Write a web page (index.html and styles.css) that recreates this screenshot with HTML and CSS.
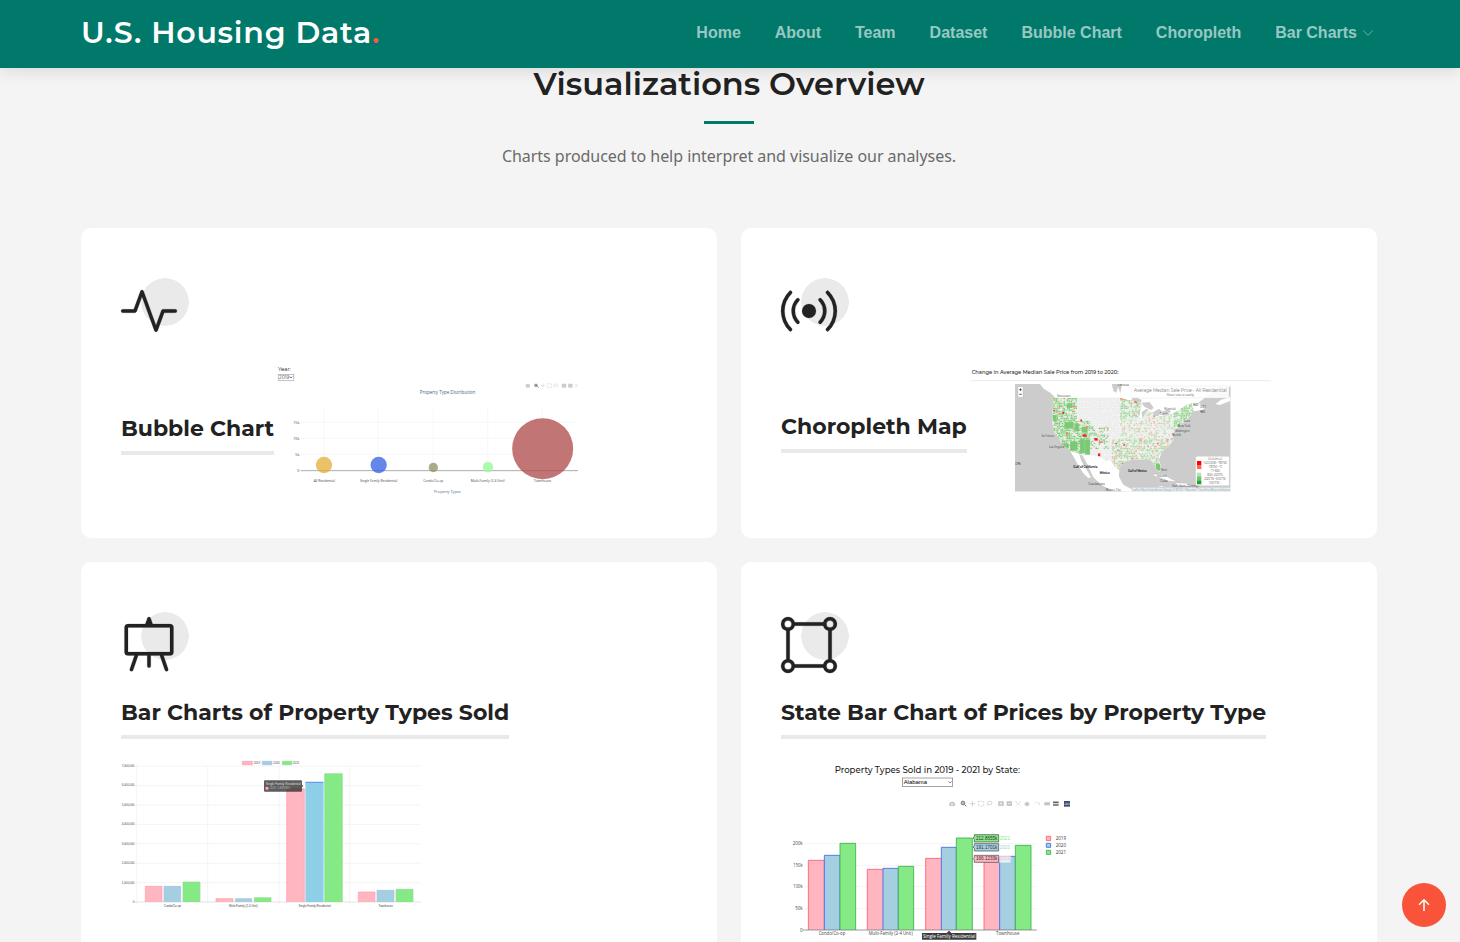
FILE: index.html
```html
<!DOCTYPE html>
<html lang="en">
<head>
<meta charset="utf-8">
<title>U.S. Housing Data</title>
<link rel="stylesheet" href="styles.css">
</head>
<body>
<header class="header">
  <div class="container header-inner">
    <h1 class="logo">U.S. Housing Data<span class="dot">.</span></h1>
    <nav class="nav">
      <a>Home</a><a>About</a><a>Team</a><a>Dataset</a><a>Bubble Chart</a><a>Choropleth</a>
      <a class="drop">Bar Charts <svg width="12" height="12" viewBox="0 0 16 16"><path d="M2 5l6 6 6-6" fill="none" stroke="currentColor" stroke-linecap="round" stroke-linejoin="round"/></svg></a>
    </nav>
  </div>
</header>
<main class="container">
  <div class="section-head">
    <h2>Visualizations Overview</h2>
    <div class="rule"></div>
    <p>Charts produced to help interpret and visualize our analyses.</p>
  </div>
  <div class="grid">
    <article class="card">
      <div class="icon"><svg width="56" height="56" viewBox="0 0 16 16"><path fill-rule="evenodd" d="M6 2a.5.5 0 0 1 .47.33L10 12.036l1.53-4.208A.5.5 0 0 1 12 7.5h3.5a.5.5 0 0 1 0 1h-3.15l-1.88 5.17a.5.5 0 0 1-.94 0L6 3.964 4.47 8.171A.5.5 0 0 1 4 8.5H.5a.5.5 0 0 1 0-1h3.15l1.88-5.17A.5.5 0 0 1 6 2"/></svg></div>
      <div class="row">
        <h4 class="title title-bubble">Bubble Chart</h4>
        <svg class="chart" width="316" height="150" viewBox="12 0 948 450">
          <text x="24" y="47" font-size="16" textLength="38" fill="#111">Year:</text>
          <rect x="24.500" y="58.500" width="47" height="18" fill="#fff" stroke="#888" stroke-width="1.500"/>
          <text x="27" y="73" font-size="14" textLength="31">2019</text><path d="M60 65l3 4 4-4" fill="none" stroke="#333" stroke-width="2"/>
          <g fill="#ccc" stroke="#ccc" stroke-width="1.500"><rect x="768" y="88" width="11" height="9"/><circle cx="798" cy="91" r="5" fill="#888"/><path d="M802 94l4 4" stroke="#888" stroke-width="3"/><path d="M812 92h13M818.500 86v12"/><rect x="832" y="86" width="12" height="12" fill="none" stroke-dasharray="4 2"/><ellipse cx="857" cy="91" rx="6" ry="4" fill="none"/><path d="M853 94l-2 4"/><rect x="876" y="87" width="12" height="10"/><rect x="895" y="87" width="12" height="10"/><path d="M915 87l8 10M923 87l-8 10"/></g>
          <text class="plot blue" x="449" y="117" font-size="15" textLength="167">Property Type Distribution</text>
          <path d="M92 202h832M92 250h832M92 298h832M162 155v192M325 155v192M489 155v192M653 155v192M817 155v192" stroke="#f4f4f4" stroke-width="2"/>
          <path d="M92 347h832" stroke="#999" stroke-width="2.500"/>
          <g class="plot tick" font-size="11" text-anchor="end"><text x="88" y="206">15k</text><text x="88" y="254">10k</text><text x="88" y="303">5k</text><text x="88" y="351">0</text></g>
          <circle cx="162" cy="330" r="24.500" fill="#e3aa2f" opacity=".72"/><circle cx="326" cy="330" r="24.500" fill="#315fe5" opacity=".75"/><circle cx="490" cy="337.500" r="14" fill="#909060" opacity=".75"/><circle cx="654" cy="336" r="15.500" fill="#98fb98" opacity=".8"/><circle cx="818" cy="281" r="91.500" fill="#b04c4c" opacity=".77"/>
          <g class="plot tick" font-size="10.500" text-anchor="middle"><text x="163" y="381" textLength="64">All Residential</text><text x="326" y="381" textLength="112">Single Family Residential</text><text x="490" y="381" textLength="60">Condo/Co-op</text><text x="653" y="381" textLength="102">Multi-Family (2-4 Unit)</text><text x="817" y="381" textLength="52">Townhouse</text></g>
          <text class="plot blue" x="492" y="413" font-size="13" textLength="80">Property Types</text>
        </svg>
      </div>
    </article>
    <article class="card">
      <div class="icon"><svg width="56" height="56" viewBox="0 0 16 16"><path d="M3.050 3.050a7 7 0 0 0 0 9.900.5.5 0 0 1-.707.707 8 8 0 0 1 0-11.314.5.5 0 0 1 .707.707m2.122 2.122a4 4 0 0 0 0 5.656.5.5 0 1 1-.708.708 5 5 0 0 1 0-7.072.5.5 0 0 1 .708.708m5.656-.708a.5.5 0 0 1 .708 0 5 5 0 0 1 0 7.072.5.5 0 1 1-.708-.708 4 4 0 0 0 0-5.656.5.5 0 0 1 0-.708m2.122-2.120a.5.5 0 0 1 .707 0 8 8 0 0 1 0 11.313.5.5 0 0 1-.707-.707 7 7 0 0 0 0-9.900.5.5 0 0 1 0-.707zM10 8a2 2 0 1 1-4 0 2 2 0 0 1 4 0"/></svg></div>
      <div class="row">
        <h4 class="title title-map">Choropleth Map</h4>
        <svg class="chart map" width="308" height="140" viewBox="6 0 924 420">
          <defs>
            <clipPath id="frame"><rect x="150" y="72" width="647" height="323"/></clipPath>
            <clipPath id="us"><path id="usShape" d="M262 113H462L485 119 510 124 530 130 526 150 522 172 532 178 540 162 548 150 562 158 572 172 590 168 610 165 632 156 660 137 680 130 686 154 668 176 650 190 634 208 622 222 625 240 608 262 590 275 580 290 582 308 590 328 582 335 570 322 562 304 546 297 528 299 505 298 485 303 465 318 463 330 448 318 435 300 422 303 408 290 375 285 345 282 315 272 294 255 280 235 266 212 262 186Z"/></clipPath>
          </defs>
          <text class="strongtext" x="20" y="41" font-size="16" textLength="440">Change in Average Median Sale Price from 2019 to 2020:</text>
          <path d="M18 62h900" stroke="#e6e6e6" stroke-width="2.500"/>
          <g clip-path="url(#frame)">
            <rect x="150" y="72" width="647" height="323" fill="#ccc"/>
            <path d="M225 72L236 86 256 98 270 112 262 125 262 186 266 212 280 235 298 258 316 274 328 294 342 320 355 340 370 354 378 352 364 328 350 305 343 284 352 286 370 318 384 350 408 374 445 393 500 396 500 388 475 374 462 350 463 322 480 305 505 298 546 297 562 304 570 322 582 335 590 328 582 300 590 275 610 258 625 240 622 218 640 200 668 176 686 154 712 150 735 130 765 135 797 122V72Z" fill="#fff"/>
            <path d="M228 84l42 32-18-2-25-20ZM440 72l6 22 8 4 5-18 7 20 5-28ZM506 108l24 12-2 8-30-6ZM533 178l-3-22 16-10 5 5-9 29ZM530 128l24-2 12 18-8 6-20-10ZM562 158l20-12 9 8-10 13-16 3ZM588 156l24-8 6 8-22 8ZM700 128l24-18 36-30h37v30l-30 10-25 20-25 2Z" fill="#ccc"/>
            <path d="M560 345q30-9 55 10l23 10-30-2-22-9ZM630 368l35 2 20 10-45-2ZM580 378l14-1 2 4-14 1Z" fill="#fff" stroke="#aaa"/>
            <use href="#usShape" fill="#ebebeb"/>
            <g id="counties" clip-path="url(#us)"></g>
            <g class="label" font-size="10"><text x="276" y="112" textLength="41">Vancouver</text><text x="598" y="149" textLength="34">Montréal</text><text x="584" y="166" textLength="28">Toronto</text><text x="458" y="77" textLength="34">Canada</text><text x="230" y="230" textLength="38">San Francisco</text><text x="252" y="265" textLength="46">Los Angeles</text><text class="bold" x="325" y="323" textLength="72">Gulf of California</text><text class="bold" x="404" y="341" textLength="30">México</text><text x="370" y="374" textLength="50">Guadalajara</text><text x="422" y="394" textLength="45">Mexico City</text><text class="bold" x="489" y="335" textLength="56">Gulf of Mexico</text><text x="576" y="352" textLength="28">Habana</text><text x="588" y="333" textLength="18">Miami</text><text x="630" y="217" textLength="44">Washington</text><text x="638" y="202" textLength="38">New York</text><text x="656" y="185" textLength="20">Boston</text><text x="622" y="229" textLength="26">Norfolk</text><text x="586" y="367" textLength="22">Cuba</text><text x="622" y="380" textLength="80">Haiti, Santo Domingo</text><text x="706" y="145">PEI</text><text x="706" y="160">NS</text><text x="684" y="138">NB</text><text x="151" y="314">PN</text></g>
            <g fill="#fff" stroke="#aaa"><rect x="159" y="80" width="15" height="32" rx="2"/><rect x="499" y="78" width="293" height="36" rx="4" fill-opacity=".88" stroke="#ddd"/><rect x="692" y="289" width="101" height="88" rx="4" stroke="#bbb"/></g>
            <path d="M163 89h7M166.500 85.500v7M163 103h7" stroke="#000" stroke-width="2"/>
            <text x="507" y="95" font-size="14" fill="#777" textLength="278">Average Median Sale Price - All Residential</text><text x="605" y="109" font-size="10" textLength="82">Hover over a county</text>
            <rect x="696" y="303" width="13" height="12" fill="red"/><rect x="696" y="315" width="13" height="12" fill="#ff6a4d"/><rect x="696" y="338" width="13" height="11" fill="#b5e2ad"/><rect x="696" y="349" width="13" height="12" fill="#71c56e"/><rect x="696" y="361" width="13" height="12" fill="#21a52d"/>
            <g font-size="10" fill="#555" text-anchor="middle"><text x="750" y="301" textLength="42">Undefined</text><text x="750" y="313" textLength="72">-1461008–-78750</text><text x="750" y="324" textLength="42">-78750–-71</text><text x="750" y="335" textLength="30">-71–826</text><text x="750" y="347" textLength="46">826–22075</text><text x="750" y="359" textLength="64">22075–106715</text><text x="750" y="371" textLength="36">106715+</text></g>
            <rect x="500" y="383" width="297" height="12" fill="#fff" opacity=".6"/><text x="502" y="392" font-size="8" fill="#4c9cc0" textLength="292">Leaflet | Map tiles by Stamen Design, CC BY 3.0 — Map data © OpenStreetMap contributors</text>
          </g>
        </svg>
      </div>
    </article>
    <article class="card tall">
      <div class="icon"><svg width="56" height="56" viewBox="0 0 16 16"><path d="M8 0a.5.5 0 0 1 .473.337L9.046 2H14a1 1 0 0 1 1 1v7a1 1 0 0 1-1 1h-1.850l1.323 3.837a.5.5 0 1 1-.946.326L11.092 11H8.500v3a.5.5 0 0 1-1 0v-3H4.908l-1.435 4.163a.5.5 0 1 1-.946-.326L3.850 11H2a1 1 0 0 1-1-1V3a1 1 0 0 1 1-1h4.954L7.527.337A.5.5 0 0 1 8 0M2 3v7h12V3z"/></svg></div>
      <h4 class="title title-sold">Bar Charts of Property Types Sold</h4>
      <svg class="chart" width="309" height="192" viewBox="33 0 927 576">
        <path d="M73 48h860M73 107h860M73 165h860M73 223h860M73 281h860M73 340h860M73 398h860M80 48v412M293 48v412M507 48v412M719 48v412" stroke="#efefef" stroke-width="2"/><path d="M73 456h860" stroke="#d5d5d5" stroke-width="2"/>
        <g class="arial tick" font-size="9" text-anchor="end"><text x="73" y="51" textLength="38">7,000,000</text><text x="73" y="109" textLength="38">6,000,000</text><text x="73" y="168" textLength="38">5,000,000</text><text x="73" y="226" textLength="38">4,000,000</text><text x="73" y="284" textLength="38">3,000,000</text><text x="73" y="342" textLength="38">2,000,000</text><text x="73" y="401" textLength="38">1,000,000</text><text x="73" y="459">0</text></g>
        <g class="pink bar"><path d="M106 456v-47h50v47M318 456v-10h51v10M530 456V116h53v340M745 456v-30h50v30M397 34h30v10h-30z"/></g>
        <g class="sky bar"><path d="M162 456v-47h50v47M376 456v-10h49v10M801 456v-35h51v35M457 34h29v10h-29z"/></g>
        <path d="M587 456V97h53v359" fill="#8ecfe8" stroke="#abcdf5" stroke-width="2"/><path d="M586 97h54" stroke="#5a8df0" stroke-width="3"/>
        <g class="green bar"><path d="M219 456v-60h51v60M433 456v-13h50v13M644 456V71h53v385M858 456v-38h51v38M517 34h29v10h-29z"/></g>
        <g class="arial tick" font-size="9"><text x="431" y="41" textLength="19">2019</text><text x="490" y="41" textLength="19">2020</text><text x="549" y="41" textLength="19">2021</text><g text-anchor="middle"><text x="187" y="471" textLength="51">Condo/Co-op</text><text x="400" y="471" textLength="86">Multi-Family (2-4 Unit)</text><text x="614" y="471" textLength="97">Single Family Residential</text><text x="827" y="471" textLength="43">Townhouse</text></g></g>
        <path d="M465 91h108q3 0 3 3v10l4 4-4 4v10q0 3-3 3H465q-3 0-3-3V94q0-3 3-3z" fill="#333" opacity=".8"/><g class="arial" font-size="10"><text x="467" y="104" fill="#ddd" textLength="105">Single Family Residential</text><text x="479" y="118" fill="#bbb" textLength="61">2019: 5,849,831</text></g><rect x="467" y="111" width="8" height="8" fill="#ffb6c1" stroke="#f66"/>
      </svg>
    </article>
    <article class="card tall">
      <div class="icon"><svg width="56" height="56" viewBox="0 0 16 16"><path d="M2 1a1 1 0 1 0 0 2 1 1 0 0 0 0-2M0 2a2 2 0 0 1 3.937-.5h8.126A2 2 0 1 1 14.500 3.937v8.126a2 2 0 1 1-2.437 2.437H3.937A2 2 0 1 1 1.500 12.063V3.937A2 2 0 0 1 0 2m2.500 1.937v8.126c.703.180 1.256.734 1.437 1.437h8.126a2 2 0 0 1 1.437-1.437V3.937A2 2 0 0 1 12.063 2.500H3.937A2 2 0 0 1 2.500 3.937M14 1a1 1 0 1 0 0 2 1 1 0 0 0 0-2M2 13a1 1 0 1 0 0 2 1 1 0 0 0 0-2m12 0a1 1 0 1 0 0 2 1 1 0 0 0 0-2"/></svg></div>
      <h4 class="title title-state">State Bar Chart of Prices by Property Type</h4>
      <svg class="chart state" width="309" height="187" viewBox="3 0 927 561">
        <text class="strongtext" x="164" y="53" font-size="25" textLength="556">Property Types Sold in 2019 - 2021 by State:</text>
        <rect x="367" y="69" width="151" height="25" fill="#fff" stroke="#777" stroke-width="2"/><text class="arial" x="371" y="88" font-size="18" textLength="70" fill="#000">Alabama</text><path d="M505 79l5 5 5-5" fill="none" stroke="#555" stroke-width="2"/>
        <g fill="#c4c4c4" stroke="#c4c4c4" stroke-width="2"><path d="M509 144h3l2-3h5l2 3h3v8h-15z"/><circle cx="516" cy="148" r="2" stroke="#fff"/><circle cx="549" cy="144" r="5.500" fill="none" stroke="#777" stroke-width="3"/><path d="M553 148l6 6M546 144h6" stroke="#777" stroke-width="3"/><path d="M569 146h17M577.500 138v17"/><rect x="595" y="139" width="16" height="14" fill="none" stroke-dasharray="5 3"/><ellipse cx="629" cy="144" rx="7" ry="5" fill="none"/><path d="M624 148l-1 5"/><rect x="656" y="140" width="14" height="12"/><rect x="681" y="140" width="14" height="12"/><path d="M659 146h8M663 142v8M684 146h8" stroke="#fff"/><path d="M706 139l16 14M722 139l-16 14" stroke-dasharray="7 3"/><path d="M733 147l8-7 8 7h-3v5h-10v-5z" stroke-width="1"/><path d="M766 143h12v10" fill="none" stroke-dasharray="4 3"/><rect x="794" y="143" width="15" height="7"/><path d="M819 142h17M819 150h17" stroke="#666" stroke-width="5"/><rect x="852" y="138" width="18" height="17" fill="#3d4b70" stroke="none"/><path d="M855 150v-4M859 150v-7M863 150v-4M867 150v-7" stroke="#dfe5f5"/></g>
        <path d="M72 266h698M72 331h698M72 395h698M72 461h698" stroke="#eee" stroke-width="2"/>
        <g class="plot tick" font-size="14" text-anchor="end"><text x="68" y="271" textLength="30">200k</text><text x="68" y="336" textLength="28">150k</text><text x="68" y="400" textLength="28">100k</text><text x="68" y="466" textLength="22">50k</text><text x="68" y="530">0</text></g>
        <path class="pink strong" d="M85 525V316h48v209M262 525V343h48v182M437 525V310h48v215M612 525V311h48v214"/>
        <path class="sky strong" d="M133 525V301h47v224M309 525V340h46v185M484 525V277h45v248M659 525V304h47v221"/>
        <path class="green strong" d="M180 525V265h47v260M355 525V334h46v191M529 525V249h48v276M706 525V271h47v254"/>
        <path d="M68 525h702" stroke="#666" stroke-width="2"/>
        <g class="plot tick" font-size="14" text-anchor="middle"><text x="156" y="540" textLength="80">Condo/Co-op</text><text x="332" y="540" textLength="132">Multi-Family (2-4 Unit)</text><text x="683" y="540" textLength="70">Townhouse</text></g>
        <path d="M500 534l7-7 7 7h75v20H426v-20z" fill="#3c3c3c"/><text class="plot" x="429" y="549" font-size="14" fill="#fff" textLength="157">Single Family Residential</text>
        <rect x="656" y="301" width="36" height="22" fill="#fff" opacity=".7"/>
        <g stroke="#444" stroke-width="2"><path d="M583 239h73v22h-73v-8l-4-4 4-4z" fill="#85ea85"/><path d="M583 266h73v22h-73v-8l-4-4 4-4z" fill="#a3cfe0"/><path d="M583 301h73v21h-73v-7l-4-4 4-4z" fill="#ffb6c1"/></g>
        <g class="arial" font-size="14"><text x="588" y="255" textLength="64">212.8655k</text><text x="588" y="282" textLength="64">191.1701k</text><text x="588" y="316" textLength="64">166.1233k</text><text x="659" y="255" fill="#85ea85" textLength="31">2021</text><text x="659" y="282" fill="#a3cfe0" textLength="31">2020</text><text x="659" y="316" fill="#ffb6c1" textLength="31">2019</text></g>
        <path class="pink strong" d="M799 244h13v13h-13z"/><path class="sky strong" d="M799 265h13v12h-13z"/><path class="green strong" d="M799 286h13v12h-13z"/>
        <g class="plot" font-size="14"><text x="827" y="256" textLength="31">2019</text><text x="827" y="276" textLength="31">2020</text><text x="827" y="297" textLength="31">2021</text></g>
      </svg>
    </article>
  </div>
</main>
<a class="to-top" aria-label="Back to top"><svg width="16" height="16" viewBox="0 0 16 16"><path d="M8 13.500V3M3.500 7.200L8 2.700l4.500 4.500" fill="none" stroke="#fff" stroke-width="1.500" stroke-linecap="round" stroke-linejoin="round"/></svg></a>
<script src="map.js"></script>
</body>
</html>
```
FILE: map.js
```js
// Scales chart labels to their slot, and fills the county grid of the choropleth.
(function () {
  document.querySelectorAll('.chart text[textLength]').forEach(function (t) {
    t.setAttribute('lengthAdjust', 'spacingAndGlyphs');
  });
  var seed = 7;
  function rnd() { seed = (seed * 16807) % 2147483647; return seed / 2147483647; }
  var out = '';
  function cell(x, y, w, h, c) {
    out += '<rect x="' + x.toFixed(1) + '" y="' + y.toFixed(1) + '" width="' + w + '" height="' + h + '" fill="' + c + '" stroke="#fff" stroke-width=".6" stroke-opacity=".6"/>';
  }
  for (var y = 112; y < 340; y += 5) {
    for (var x = 260; x < 692; x += 5) {
      var r = rnd(), q = rnd() * 2, p = rnd() * 2, c = '#ebebeb';
      if (x < 335 && y < 186) c = r < .62 ? '#82cb7b' : r < .78 ? '#b5dfae' : r < .81 ? '#fa8060' : c;
      else if (x < 375 && y > 180) c = r < .5 ? '#78c772' : r < .78 ? '#aedca7' : r < .8 ? '#f87959' : c;
      else if (x < 430 && y > 195 && y < 265) c = r < .32 ? '#8fce87' : r < .35 ? '#f98060' : c;
      else if (x >= 465 && y < 172 && x < 535) c = r < .6 ? '#a0d79b' : r < .66 ? '#fb9a82' : c;
      else if (x > 620 && y < 200) c = r < .7 ? '#98d590' : c;
      else if (x >= 438 && y > 235) c = r < .48 ? '#a8daa1' : r < .6 ? '#f9b4a3' : r < .62 ? '#f55' : c;
      else if (x >= 462) c = r < .28 ? '#b5dfae' : r < .36 ? '#f9baaa' : c;
      cell(x + q, y + p, 5.5, 5.5, c);
    }
  }
  [[315, 244, 22, 28], [345, 237, 15, 42], [360, 238, 15, 46], [298, 186, 28, 20], [328, 190, 14, 24], [350, 200, 18, 18], [263, 165, 12, 18], [572, 310, 14, 22], [305, 130, 18, 14], [288, 252, 24, 12]].forEach(function (b) { cell(b[0], b[1], b[2], b[3], '#7bc875'); });
  [[352, 223, 13, 7], [388, 234, 10, 8], [399, 280, 7, 9], [508, 123, 8, 5], [292, 155, 5, 7], [346, 178, 5, 6], [265, 149, 4, 5], [474, 252, 5, 5], [456, 268, 4, 5], [565, 165, 4, 5]].forEach(function (b) { cell(b[0], b[1], b[2], b[3], '#ee1717'); });
  [[401, 244, 13, 5], [465, 114, 18, 5], [303, 216, 6, 8], [362, 198, 6, 7], [322, 138, 10, 4]].forEach(function (b) { cell(b[0], b[1], b[2], b[3], '#fb7a5a'); });
  document.getElementById('counties').innerHTML = out;
})();
```
FILE: styles.css
```css
* { box-sizing: border-box; }
body { margin: 0; height: 942px; overflow: hidden; background: #f4f4f4; font-family: "Open Sans", sans-serif; color: #222; }
h1, h2, h4, p { margin: 0; }
svg { display: block; }
.container { width: 1320px; margin-left: 69px; padding: 0 12px; }
.header { height: 68px; background: #00796b; box-shadow: 0 0 18px rgba(0,0,0,.15); position: relative; z-index: 2; }
.header-inner { height: 68px; display: flex; align-items: center; justify-content: space-between; }
.logo { font: 600 30px/40px Montserrat, Inter, sans-serif; letter-spacing: .8px; color: #fff; margin-top: -3px; white-space: nowrap; }
.logo .dot { color: #f85a40; }
.nav { display: flex; gap: 34px; padding-right: 3px; margin-top: -3px; font: bold 16px "Liberation Sans", Arial, sans-serif; color: rgba(255,255,255,.6); }
.drop { display: flex; align-items: center; gap: 5px; }
.section-head { height: 160px; display: flex; flex-direction: column; align-items: center; }
.section-head h2 { margin-top: -6px; font: 600 32px/44px Montserrat, Inter, sans-serif; white-space: nowrap; }
.rule { width: 50px; height: 3px; background: #00796b; margin-top: 15px; }
.section-head p { font: 16px/24px "Noto Sans", sans-serif; letter-spacing: -.035px; color: #6a6a6a; margin-top: 20px; }
.grid { display: grid; grid-template-columns: 636px 636px; gap: 24px; }
.card { height: 310px; background: #fff; border-radius: 10px; padding: 50px 40px; }
.card.tall { height: 380px; padding-bottom: 0; border-radius: 10px 10px 0 0; overflow: hidden; }
.icon { width: 68px; height: 61px; padding-top: 5px; background: radial-gradient(circle 24px at 44px 24px, #eaeaea 23.500px, transparent 24px); }
.icon svg { overflow: visible; }
.icon path { fill: #222; stroke: #222; stroke-width: .06; }
.row { display: flex; align-items: flex-start; margin-top: 16px; }
.title { height: 41px; border-bottom: 4px solid #e9e9e9; font: 700 22px/30px Montserrat, Inter, sans-serif; white-space: nowrap; }
.title-bubble { margin-top: 59px; width: 153px; }
.title-map { margin-top: 57px; width: 186px; }
.title-sold, .title-state { margin-top: 25px; }
.title-sold { width: 388px; }
.title-state { width: 485px; }
.chart { font-family: Montserrat, "Open Sans", sans-serif; fill: #333; }
.strongtext { font-weight: 500; fill: #222; }
.bold { font-weight: 700; }
.map { margin-top: 5px; }
.tall .chart { margin-top: 11px; }
.tall .state { margin-top: 16px; }
.tick { fill: #444; }
.blue { fill: #4a6280; }
.label { fill: #222; }
.plot { font-family: "Open Sans", sans-serif; }
.arial { font-family: "Liberation Sans", Arial, sans-serif; }
.pink { fill: #ffb6c1; stroke: #ff9ba7; }
.sky { fill: #a3cfe0; stroke: #a9b8f5; }
.green { fill: #85ea85; stroke: #8bdd90; }
.bar { stroke-width: 2; }
.strong { stroke-width: 2.500; }
.pink.strong { stroke: #ff5b68; }
.sky.strong { stroke: #3f67ed; }
.green.strong { stroke: #38ae47; }
.to-top { position: fixed; left: 1402px; top: 883px; width: 44px; height: 44px; border-radius: 50%; background: #f9533a; display: flex; align-items: center; justify-content: center; }
```
